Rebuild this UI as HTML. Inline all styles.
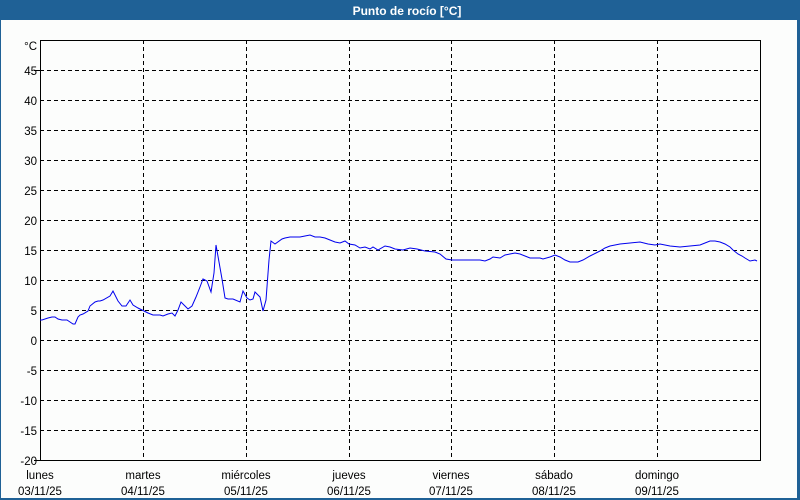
<!DOCTYPE html>
<html><head><meta charset="utf-8"><style>
body{margin:0;width:800px;height:500px;overflow:hidden;background:#fcfdfc;font-family:"Liberation Sans",sans-serif}
</style></head><body>
<svg width="800" height="500" xmlns="http://www.w3.org/2000/svg" style="position:absolute;left:0;top:0">
<rect x="0" y="0" width="800" height="500" fill="#fcfdfc"/>
<rect x="0" y="0" width="800" height="20" fill="#1f6196"/>
<rect x="0" y="20" width="1" height="480" fill="#1f6196"/>
<rect x="797" y="20" width="3" height="480" fill="#1f6196"/>
<rect x="0" y="498" width="800" height="2" fill="#1f6196"/>
<text x="407" y="15" fill="#fff" font-size="12" font-weight="bold" text-anchor="middle">Punto de rocío [°C]</text>
<g stroke="#000" stroke-width="1" stroke-dasharray="4,3" shape-rendering="crispEdges">
<line x1="40" y1="70.5" x2="760" y2="70.5"/><line x1="40" y1="100.5" x2="760" y2="100.5"/>
<line x1="40" y1="130.5" x2="760" y2="130.5"/><line x1="40" y1="160.5" x2="760" y2="160.5"/>
<line x1="40" y1="190.5" x2="760" y2="190.5"/><line x1="40" y1="220.5" x2="760" y2="220.5"/>
<line x1="40" y1="250.5" x2="760" y2="250.5"/><line x1="40" y1="280.5" x2="760" y2="280.5"/>
<line x1="40" y1="310.5" x2="760" y2="310.5"/><line x1="40" y1="340.5" x2="760" y2="340.5"/>
<line x1="40" y1="370.5" x2="760" y2="370.5"/><line x1="40" y1="400.5" x2="760" y2="400.5"/>
<line x1="40" y1="430.5" x2="760" y2="430.5"/>
<line x1="143.5" y1="40" x2="143.5" y2="460"/><line x1="246.5" y1="40" x2="246.5" y2="460"/>
<line x1="349.5" y1="40" x2="349.5" y2="460"/><line x1="451.5" y1="40" x2="451.5" y2="460"/>
<line x1="554.5" y1="40" x2="554.5" y2="460"/><line x1="657.5" y1="40" x2="657.5" y2="460"/>
</g>
<g stroke="#000" shape-rendering="crispEdges">
<line x1="40.5" y1="40" x2="40.5" y2="461"/><line x1="40" y1="40.5" x2="760" y2="40.5"/>
<line x1="760.5" y1="40" x2="760.5" y2="461"/><line x1="40" y1="460.5" x2="761" y2="460.5"/>
<line x1="34" y1="70.5" x2="40" y2="70.5"/><line x1="34" y1="460.5" x2="40" y2="460.5"/>
</g>
<g font-size="11.5" fill="#000" text-anchor="end">
<text x="37" y="50">°C</text><text x="37" y="75">45</text><text x="37" y="105">40</text><text x="37" y="135">35</text>
<text x="37" y="165">30</text><text x="37" y="195">25</text><text x="37" y="225">20</text><text x="37" y="255">15</text>
<text x="37" y="285">10</text><text x="37" y="315">5</text><text x="37" y="345">0</text><text x="37" y="375">-5</text>
<text x="37" y="405">-10</text><text x="37" y="435">-15</text><text x="37" y="465">-20</text>
</g>
<g font-size="11.5" fill="#000" text-anchor="middle">
<text x="40" y="479">lunes</text><text x="40" y="495">03/11/25</text>
<text x="143" y="479">martes</text><text x="143" y="495">04/11/25</text>
<text x="246" y="479">miércoles</text><text x="246" y="495">05/11/25</text>
<text x="349" y="479">jueves</text><text x="349" y="495">06/11/25</text>
<text x="451" y="479">viernes</text><text x="451" y="495">07/11/25</text>
<text x="554" y="479">sábado</text><text x="554" y="495">08/11/25</text>
<text x="657" y="479">domingo</text><text x="657" y="495">09/11/25</text>
</g>
<polyline fill="none" stroke="#0000ee" stroke-width="1" points="40,320 42,320 48,318 52,317 55,317 58,319 62,320 67,320 70,322 73,324 75,324 78,317 80,315 83,314 88,311 90,306 95,302 98,301 100,301 103,300 110,296 113,291 118,301 122,306 126,306 130,300 133,305 138,308 144,311 148,313 153,315 160,315 163,316 168,314 172,313 175,316 178,310 181,302 185,306 188,309 192,306 196,297 200,287 203,279 207,281 211,292 214,273 216,245 219,262 222,279 225,298 228,299 233,299 240,302 243,291 247,298 250,300 253,299 255,292 260,297 263,311 266,300 269,260 271,241 275,244 282,239 285,238 290,237 300,237 305,236 310,235 315,237 320,237 325,238 330,240 335,242 340,243 345,241 349,244 355,245 360,248 365,247 370,249 373,247 378,250 385,246 390,247 395,249 403,250 410,248 417,249 425,251 435,252 440,254 446,259 452,260 470,260 480,260 485,261 490,259 493,257 500,258 505,255 510,254 515,253 520,254 525,256 530,258 540,258 543,259 550,257 555,255 560,257 565,260 570,262 578,262 583,260 590,256 600,251 605,248 610,246 615,245 620,244 630,243 640,242 648,244 655,245 660,244 670,246 680,247 690,246 700,245 705,243 710,241 715,241 720,242 725,244 730,247 733,250 738,254 742,256 745,258 750,261 755,260 757,261"/>
</svg>
</body></html>
